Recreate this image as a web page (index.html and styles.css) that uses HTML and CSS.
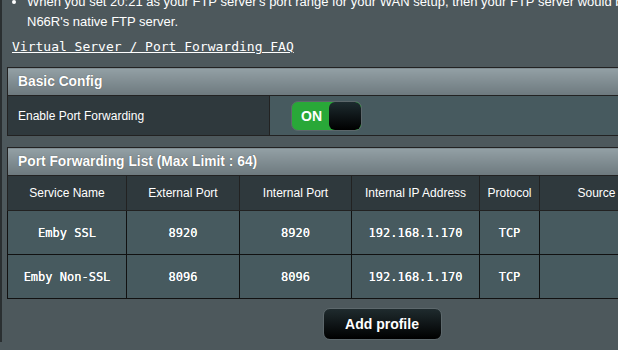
FILE: index.html
```html
<!DOCTYPE html>
<html>
<head>
<meta charset="utf-8">
<link rel="stylesheet" href="styles.css">
</head>
<body>
<div class="page">
  <div class="content">
    <ul class="notes">
      <li>When you set 20:21 as your FTP server's port range for your WAN setup, then your FTP server would be in conflict with RT-N66R's native FTP server.</li>
    </ul>
    <div class="notes-cont">N66R's native FTP server.</div>
    <a class="faq" href="#">Virtual Server / Port Forwarding FAQ</a>

    <table class="box basic">
      <colgroup>
        <col class="k1">
        <col class="k2">
      </colgroup>
      <thead>
        <tr><th colspan="2">Basic Config</th></tr>
      </thead>
      <tbody>
        <tr>
          <td class="label">Enable Port Forwarding</td>
          <td class="value">
            <div class="toggle"><span class="on">ON</span><span class="knob"></span></div>
          </td>
        </tr>
      </tbody>
    </table>

    <table class="box list">
      <colgroup>
        <col class="c1">
        <col class="c2">
        <col class="c3">
        <col class="c4">
        <col class="c5">
        <col class="c6">
        <col class="c7">
      </colgroup>
      <thead>
        <tr><th colspan="7">Port Forwarding List (Max Limit : 64)</th></tr>
      </thead>
      <tbody>
        <tr class="cols">
          <td>Service Name</td>
          <td>External Port</td>
          <td>Internal Port</td>
          <td>Internal IP Address</td>
          <td>Protocol</td>
          <td>Source</td>
          <td></td>
        </tr>
        <tr class="data">
          <td>Emby SSL</td>
          <td>8920</td>
          <td>8920</td>
          <td>192.168.1.170</td>
          <td>TCP</td>
          <td></td>
          <td></td>
        </tr>
        <tr class="data">
          <td>Emby Non-SSL</td>
          <td>8096</td>
          <td>8096</td>
          <td>192.168.1.170</td>
          <td>TCP</td>
          <td></td>
          <td></td>
        </tr>
      </tbody>
    </table>

    <div class="actions">
      <button class="btn">Add profile</button>
    </div>
  </div>
</div>
</body>
</html>
```

FILE: styles.css
```css
html, body {
  margin: 0;
  padding: 0;
  height: 100%;
  overflow: hidden;
  background: #4d585c;
}
.page {
  border-left: 2px solid #2a2f31;
  height: 100%;
  box-sizing: border-box;
  padding-left: 5px;
  font-family: "Liberation Sans", Arial, sans-serif;
  color: #fff;
}
.content {
  width: 750px;
}
.notes {
  margin: -8px 0 0 0;
  padding: 0 0 0 20px;
  font-size: 13px;
  line-height: 20px;
  white-space: nowrap;
  height: 20px;
}
.notes li {
  list-style: disc;
}
.notes-cont {
  padding-left: 20px;
  font-size: 13px;
  line-height: 20px;
}
.faq {
  display: inline-block;
  margin: 8px 0 0 5px;
  font-family: "DejaVu Sans Mono", monospace;
  font-size: 13px;
  line-height: 14px;
  color: #fff;
  text-decoration: underline;
}
.box {
  width: 750px;
  table-layout: fixed;
  border-collapse: collapse;
  border: 1px solid #222;
  margin-top: 12px;
}
.box th {
  height: 27px;
  padding: 0 0 0 10px;
  text-align: left;
  font-size: 13.8px;
  font-weight: bold;
  color: #fff;
  text-shadow: 0 0 1px #444;
  background: linear-gradient(#93a0a5, #6d797e);
  border-bottom: 1px solid #222;
}
.k1 { width: 262px; }
.basic .label {
  height: 39px;
  padding: 0 0 0 10px;
  background: #2f393d;
  font-size: 12px;
  border-right: 1px solid #222;
}
.basic .value {
  background: #475a5f;
  padding: 0 0 0 21px;
}
.toggle {
  display: flex;
  width: 71px;
  height: 30px;
  box-sizing: border-box;
  border: 1px solid #5c676b;
  border-radius: 7px;
  overflow: hidden;
  background: #29a838;
}
.toggle .on {
  width: 35px;
  line-height: 28px;
  text-align: center;
  font-weight: bold;
  font-size: 14px;
  padding-left: 2px;
}
.toggle .knob {
  flex: 1;
  border-radius: 6px;
  background: linear-gradient(#1d2b2f, #000);
}
.list {
  margin-top: 11px;
}
.list td {
  text-align: center;
  border: 1px solid #111;
  color: #fff;
  overflow: hidden;
  white-space: nowrap;
}
.list .cols td {
  height: 32px;
  background: #2f393d;
  font-size: 12px;
  border-color: #222;
}
.list .data td {
  height: 41px;
  background: #475a5f;
  font-family: "DejaVu Sans Mono", monospace;
  font-size: 12px;
  text-shadow: 0 0 0.3px #fff;
}
.c1 { width: 119px; }
.c2 { width: 113px; }
.c3 { width: 112px; }
.c4 { width: 128px; }
.c5 { width: 60px; }
.c6 { width: 114px; }
.c7 { width: 104px; }
.actions {
  display: flex;
  justify-content: center;
  padding-top: 9px;
}
.btn {
  width: 119px;
  height: 32px;
  border: 1px solid #5d686c;
  border-radius: 7px;
  background: linear-gradient(#1f2b2e, #000);
  color: #fff;
  font-family: "Liberation Sans", Arial, sans-serif;
  font-weight: bold;
  font-size: 14px;
}
```
